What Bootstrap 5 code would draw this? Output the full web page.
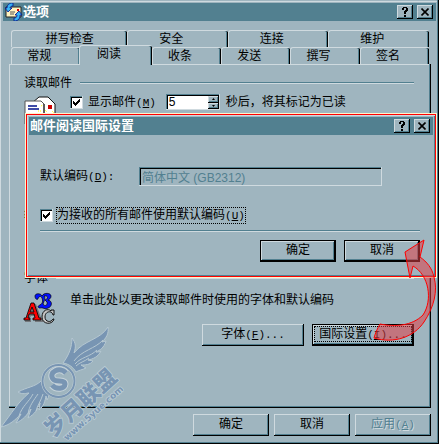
<!DOCTYPE html>
<html lang="zh-CN">
<head>
<meta charset="utf-8">
<meta name="viewport" content="width=device-width, initial-scale=1">
<title>选项</title>
<link href="https://cdn.jsdelivr.net/npm/bootstrap@5.3.0/dist/css/bootstrap.min.css" rel="stylesheet">
<style>
:root{--face:#9fb5bf;--hi:#cfdadf;--lo:#528090}
body{font:12px/14px "Liberation Sans","Noto Sans CJK SC",sans-serif;color:#000;background:var(--face)}
button,input{font:inherit;color:inherit}
.lat{font-family:"Liberation Mono",monospace;font-size:11px}
.win{background:var(--face);padding:3px 3px 8px;box-shadow:inset -1px -1px #000,inset -2px -2px var(--lo),inset 0 1px var(--face),inset 1px 2px var(--hi)}
.caption-bar{background:var(--lo);height:18px;padding:0 3px 0 1px;color:#fff}
.caption-bar h1,.caption-bar h2{font-size:13px;line-height:18px;font-weight:700}
.caption-bar svg{margin-left:1px}
.raised{border:0;border-radius:0;background:var(--face);box-shadow:inset -1px -1px #000,inset 1px 1px var(--hi),inset -2px -2px var(--lo)}
.sysbtn{width:16px;height:14px;color:#000}
.push{height:22px;width:76px;padding:0 0 2px}
.push.wide{width:102px}
.push.strong{box-shadow:inset 0 0 0 1px #000,inset -2px -2px #000,inset 2px 2px var(--hi),inset -3px -3px var(--lo)}
.push:disabled{color:var(--lo);text-shadow:1px 1px var(--hi)}
.tabs-area{padding:9px 7px 0 8px}
.tabrow{height:17px}
.tabbtn{border:1px solid var(--hi);border-width:1px 0 0 1px;border-radius:3px 2px 0 0;background:var(--face);box-shadow:inset -1px 0 #000,inset -2px 0 var(--lo);padding:0 14px 0 0;flex:1 1 0}
.tabbtn.first-wide{flex-grow:1.35;padding:0}
.tabbtn.active{height:20px;margin:-2px 0 -1px -1px;padding-bottom:3px;z-index:1;flex-grow:1.06}
.pane{margin:0 5px 0 6px;padding:12px 17px 8px 15px;box-shadow:inset -1px -1px #000,inset -2px -2px var(--lo),inset 1px 1px var(--hi)}
.rule{height:2px;background:var(--lo);border-bottom:1px solid var(--hi)}
.g-read{min-height:131px}
.g-code{min-height:64px}
.sunken{border:0;border-radius:0;box-shadow:inset -1px -1px var(--hi),inset 1px 1px var(--lo),inset 2px 2px #000}
.form-check-input.tick{width:13px;height:13px;margin:0;border:0;border-radius:0;background-color:#fff;background-size:13px 13px;box-shadow:inset -1px -1px var(--hi),inset 1px 1px var(--lo),inset 2px 2px #000}
.form-check-input.tick:checked{background-image:url("data:image/svg+xml,%3Csvg xmlns='http://www.w3.org/2000/svg' viewBox='0 0 13 13' shape-rendering='crispEdges'%3E%3Cpath d='M3 5h1v1h1v1h1v-1h1v-1h1v-1h1v-1h1v3h-1v1h-1v1h-1v1h-1v1h-1v-1h-1v-1h-1z'/%3E%3C/svg%3E")}
.show-label{margin:0 10px 0 5px}
.after-label{margin-left:6px}
.spin{width:54px;height:16px;padding:2px 1px 1px 2px;background:#fff}
.spin input{width:40px;height:13px;line-height:13px;padding:0 1px;border:0;background:none}
.spin .raised{width:11px;height:7px;padding:0;line-height:0}
.spin svg,.sysbtn svg{display:block;margin:auto}
.dlg{position:absolute;left:25px;right:2px;top:113px;background:var(--face);border:1px solid #fff4cc;padding:1px;box-shadow:inset 0 0 0 1px red}
.dlg-in{padding:1px 2px 14px 1px;border:1px solid var(--hi);border-width:1px 0 0 1px;box-shadow:inset -1px -1px var(--lo)}
.dlg-body{padding:32px 13px 0 11px}
.dlg-field{margin-bottom:22px}
.dlg-check{margin-bottom:7px}
.codefield{width:243px;height:19px;padding:0 3px;background:var(--face);color:var(--lo)}
.focus-box{outline:1px dotted #000}
.dlg-label{width:99px}
.icon-col{width:46px}
.font-row{height:31px}
.font-row svg{overflow:visible}
.foot{gap:5px;padding:6px 5px 0}
.overlay{position:absolute;pointer-events:none}
.arrow{right:0;top:235px}
.brand{left:0;bottom:0}
</style>
<script src="https://cdn.jsdelivr.net/npm/bootstrap@5.3.0/dist/js/bootstrap.bundle.min.js"></script>
</head>
<body>
<main class="win position-relative min-vh-100 d-flex flex-column">
  <header class="caption-bar d-flex align-items-center">
    <svg width="18" height="18" viewBox="0 0 18 18" aria-hidden="true"><path d="M1 4h15v10H1z" fill="#fff3c0" stroke="#222"/><path d="M5 9h5M5 11h4" stroke="#555"/><path d="M12 6h2v2h-2z" fill="#d00"/><path d="M8 0C4 0 2 2 2 5H0l3 4 4-4H5c0-1 1-2 3-2zM9 18c5 0 6-3 6-6h2l-3-4-4 4h2c0 2-1 3-3 3z" fill="#37b5f5" stroke="#00108c" stroke-width=".8"/></svg>
    <h1 class="mb-0 flex-grow-1">选项</h1>
    <div class="d-flex gap-1">
      <button class="raised sysbtn p-0" aria-label="帮助"><svg width="10" height="10" viewBox="0 0 10 10" shape-rendering="crispEdges"><path d="M2 1h1V0h4v1h1v3H7v1H6v2H4V4h1V3h1V1H4v2H2zM4 8h2v2H4z"/></svg></button>
      <button class="raised sysbtn p-0" aria-label="关闭"><svg width="8" height="8" viewBox="0 0 8 8"><path d="M0.5.5l7 7M7.5.5l-7 7" stroke="#000" stroke-width="1.6"/></svg></button>
    </div>
  </header>

  <nav class="tabs-area" aria-label="选项页">
    <div class="tabrow d-flex"><button class="tabbtn first-wide">拼写检查</button><button class="tabbtn">安全</button><button class="tabbtn">连接</button><button class="tabbtn">维护</button></div>
    <div class="tabrow d-flex"><button class="tabbtn">常规</button><button class="tabbtn active position-relative">阅读</button><button class="tabbtn">收条</button><button class="tabbtn">发送</button><button class="tabbtn">撰写</button><button class="tabbtn">签名</button></div>
  </nav>

  <section class="pane flex-grow-1">
    <div class="g-read">
      <div class="d-flex align-items-center mb-1"><span>读取邮件</span><div class="rule flex-grow-1 ms-2"></div></div>
      <div class="d-flex">
        <div class="icon-col flex-shrink-0"><svg width="32" height="32" viewBox="0 0 32 32" aria-hidden="true"><path d="M8 9l7-6h9l7 7v20H8z" fill="#fff" stroke="#111"/><path d="M1 7h16l3 3v20H1z" fill="#fff" stroke="#555"/><path d="M4 12h9M4 15h11" stroke="#00108c" stroke-width="1.5"/><path d="M24 11h4v4h-4z" fill="#c00"/><path d="M21 16l2 2M28 17l2 2M17 12l2-1M14 17h4" stroke="#ff0" stroke-dasharray="1 1"/><path d="M20 10v20" stroke="#111"/></svg></div>
        <div class="d-flex align-items-center align-self-start">
          <input class="form-check-input tick" type="checkbox" id="show" checked>
          <label class="show-label" for="show">显示邮件<span class="lat">(<u>M</u>)</span></label>
          <div class="spin sunken d-flex">
            <input type="text" value="5" id="secs" aria-label="秒数">
            <div class="d-flex flex-column flex-shrink-0">
              <button class="raised" aria-label="增加"><svg width="3" height="2" viewBox="0 0 3 2"><path d="M0 2h3L1.500 0z"/></svg></button>
              <button class="raised" aria-label="减少"><svg width="3" height="2" viewBox="0 0 3 2"><path d="M0 0h3L1.500 2z"/></svg></button>
            </div>
          </div>
          <label class="after-label" for="secs">秒后，将其标记为已读</label>
        </div>
      </div>
    </div>
    <div class="g-code"><span>编码</span></div>
    <div>
      <div class="d-flex align-items-center mb-2"><span>字体</span><div class="rule flex-grow-1 ms-2"></div></div>
      <div class="d-flex font-row">
        <div class="icon-col flex-shrink-0"><svg width="34" height="34" viewBox="0 0 34 34" aria-hidden="true"><g fill="#75777b" transform="translate(1 1)"><path d="M0 26h2l6-16h3l6 16h1v2h-8v-2h2l-2-4H6l-2 4h2v2H0z"/></g><path fill-rule="evenodd" d="M0 25h2L7 10h3l5 15h2v2H9v-2h2l-1-4H5l-1 4h2v2H0zM6 19h4l-2-5z" fill="red" stroke="#000" stroke-width=".8"/><path d="M11 3c0-3 6-3 7 0 2-4 9-3 9 0 0 2-1 3-3 4 5 1 4 7 0 8-3 2-5-1-8 0-2 0-3-2 0-3 3-2 3-4 2-7-1-3-4-1-4 1-1 1-3 0-3-3zm9 0c2 2 0 5-1 8 2 3 5 1 4-2l-2-2c3-1 3-4 1-4z" fill="#0010ff" stroke="#000" stroke-width=".7"/><path d="M27 17h3v5h-1c-1-5-8-4-8 2 0 5 6 6 8 2h1c-1 6-12 6-12-2 0-7 6-9 9-6z" fill="#c4c4c4" stroke="#000" stroke-width=".9"/></svg></div>
        <span>单击此处以更改读取邮件时使用的字体和默认编码</span>
      </div>
      <div class="d-flex justify-content-end gap-2">
        <button class="raised push wide me-n1">字体<span class="lat">(<u>F</u>)...</span></button>
        <button class="raised push wide strong"><span class="focus-box px-1">国际设置<span class="lat">(<u>I</u>)...</span></span></button>
      </div>
    </div>
  </section>

  <footer class="d-flex justify-content-end foot">
    <button class="raised push">确定</button>
    <button class="raised push">取消</button>
    <button class="raised push" disabled>应用<span class="lat">(<u>A</u>)</span></button>
  </footer>

  <section class="dlg" role="dialog" aria-labelledby="dlgtitle">
    <div class="dlg-in">
      <header class="caption-bar d-flex align-items-center">
        <h2 class="mb-0 flex-grow-1" id="dlgtitle">邮件阅读国际设置</h2>
        <div class="d-flex gap-1">
          <button class="raised sysbtn p-0" aria-label="帮助"><svg width="10" height="10" viewBox="0 0 10 10" shape-rendering="crispEdges"><path d="M2 1h1V0h4v1h1v3H7v1H6v2H4V4h1V3h1V1H4v2H2zM4 8h2v2H4z"/></svg></button>
          <button class="raised sysbtn p-0" aria-label="关闭"><svg width="8" height="8" viewBox="0 0 8 8"><path d="M0.5.5l7 7M7.5.5l-7 7" stroke="#000" stroke-width="1.6"/></svg></button>
        </div>
      </header>
      <div class="dlg-body">
        <div class="d-flex align-items-center dlg-field">
          <label class="dlg-label" for="enc">默认编码<span class="lat">(<u>D</u>):</span></label>
          <input class="sunken codefield" id="enc" type="text" value="简体中文 (GB2312)" disabled>
        </div>
        <div class="d-flex align-items-center dlg-check">
          <input class="form-check-input tick" type="checkbox" id="all" checked>
          <label class="ms-1 focus-box" for="all">为接收的所有邮件使用默认编码<span class="lat">(<u>U</u>)</span></label>
        </div>
        <div class="rule mb-2"></div>
        <div class="d-flex justify-content-end gap-2">
          <button class="raised push strong">确定</button>
          <button class="raised push strong">取消</button>
        </div>
      </div>
    </div>
  </section>

  <svg class="overlay brand" width="124" height="124" viewBox="0 320 124 124" aria-hidden="true">
    <g fill="#7895b3" stroke="#b6c8d2" stroke-width="1">
      <path d="M63 363c6-8 9-16 9-25 4 5 4 9 2 15 10-13 26-13 34-26 1 7-2 11-6 15l4-1c-2 7-6 9-10 11 2 0 4 0 5-1-3 6-8 8-13 9l5 1c-3 4-8 4-12 4l5 3c-4 2-7 2-10 4-3-5-7-8-13-9z"/>
      <path d="M41 381c-6 6-14 6-23 11 5 3 8 1 11 1-11 9-17 20-28 34 9-2 14-7 20-13l-5 9c7-3 11-8 15-14l-3 9c7-4 10-9 12-15l-1 7c5-4 6-9 7-14l1 4c2-3 3-8 3-12-5-1-8-4-9-7z"/>
      <path d="M103 340c-8 9-21 10-29 21M97 350c-7 7-16 7-22 14M89 358c-5 4-9 4-13 8M33 394c-4 8-11 12-14 22M38 394c-4 6-9 12-10 20M43 394c-2 7-6 12-7 17" fill="none"/>
    </g>
    <circle cx="58.500" cy="381" r="16" fill="#9fb5bf" stroke="#c6d3da" stroke-width="3"/>
    <circle cx="58.500" cy="381" r="16" fill="none" stroke="#7895b3" stroke-width="2"/>
    <path d="M66 373c-6-7-18-1-13 6 3 4 12 0 12 5 0 5-9 6-13 1" fill="none" stroke="#c6d3da" stroke-width="7"/>
    <path d="M66 373c-6-7-18-1-13 6 3 4 12 0 12 5 0 5-9 6-13 1" fill="none" stroke="#7895b3" stroke-width="5"/>
    <g fill="#7895b3" stroke="#bccdd6" stroke-width="1.500" paint-order="stroke">
      <text transform="translate(53 438) rotate(-42)" font-family="Noto Sans CJK SC,sans-serif" font-weight="900" font-size="22">岁月联盟</text>
      <text transform="translate(67 441) rotate(-42)" font-family="DejaVu Sans,sans-serif" font-weight="700" font-size="9">www.5yue.com</text>
    </g>
  </svg>
  <svg class="overlay arrow" width="79" height="110" viewBox="360 235 79 110" aria-hidden="true"><path d="M424 240L405 252L410 278L413 266C429 275 433 300 423 315C412 326 395 327 380 324C377 329 375 334 374 338C394 344 414 337 424 322C434 307 438 291 434 277C432 268 427 262 420 257Z" fill="#df3f46" fill-opacity=".54" stroke="#f00"/></svg>
</main>
</body>
</html>
